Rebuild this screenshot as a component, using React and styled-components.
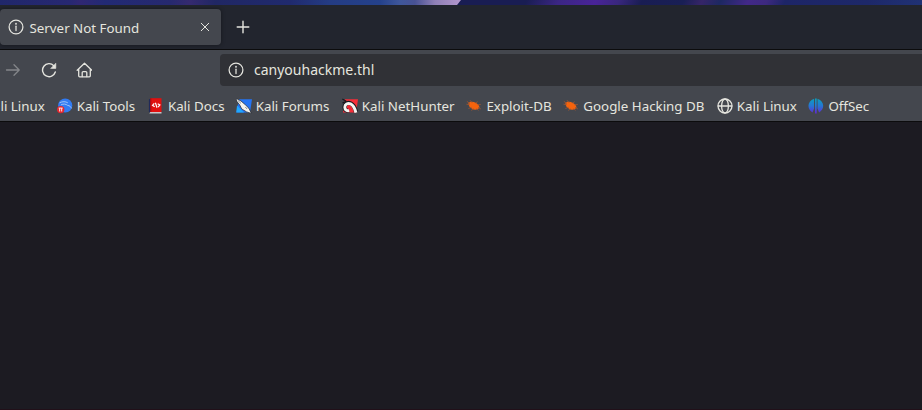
import React from "react";
import styled, { createGlobalStyle } from "styled-components";

const GlobalStyle = createGlobalStyle`
  * { box-sizing: border-box; }
  html, body { margin: 0; padding: 0; overflow: hidden; background: #1c1b22; }
  body { font-family: "Noto Sans", sans-serif; color: #e5e5df; }
`;

const Window = styled.div`
  display: flex;
  flex-direction: column;
  width: 100%;
  height: 410px;
  overflow: hidden;
  background: #1c1b22;
  border-bottom: 1px solid #211019;
`;

const Wallpaper = styled.div`
  flex: none;
  display: flex;
  height: 5px;
  background: linear-gradient(115deg,
      #191d53 0, #191d53 57%, #3b2684 60.5%, #492398 64.5%, #39277d 67%, #191d53 69.5%,
      #191f55 74%, #362568 76%, #1d2862 78%, #422888 81%, #3d2980 83%,
      #1d2567 85%, #1d2869 94%, #203275 100%);
`;

const WallpaperGlow = styled.div`
  width: 461px;
  clip-path: polygon(0 0, 100% 0, 457px 100%, 0 100%);
  background: linear-gradient(90deg,
      #20276b 0, #272872 70px, #302773 80px, #222a75 105px, #26296f 170px,
      #352a70 190px, #202764 215px, #202a6e 290px, #243c84 330px, #24418b 380px,
      #3f579b 400px, #485294 415px, #8f80b6 435px, #b397cd 461px);
`;

const TabStrip = styled.div`
  flex: none;
  display: flex;
  align-items: center;
  height: 45px;
  border-bottom: 1px solid #0c0c0d;
  background: #22252e;
`;

const Tab = styled.div`
  display: flex;
  align-items: center;
  width: 221px;
  height: 36px;
  padding: 0 11px 0 7.5px;
  border-radius: 4px;
  background: #44474e;
  box-shadow: 0 0 4px rgba(0, 0, 0, 0.4);
`;

const TabTitle = styled.span`
  flex: 1;
  margin-left: 6px;
  font-size: 13.33px;
  line-height: 18px;
  white-space: nowrap;
  padding-top: 2px;
`;

const NewTab = styled.div`
  display: flex;
  margin-left: 13.5px;
`;

const NavBar = styled.div`
  flex: none;
  display: flex;
  align-items: center;
  height: 40px;
  padding-left: 5px;
  background: #44474e;
`;

const NavButton = styled.div`
  display: flex;
  width: 16px;
  height: 16px;
  margin-right: ${(p) => p.$gap}px;
  color: ${(p) => (p.$disabled ? "#84868a" : "#e5e5df")};
`;

const AddressField = styled.div`
  flex: 1;
  display: flex;
  align-items: center;
  height: 32px;
  padding-left: 7.5px;
  border-radius: 4px 0 0 4px;
  background: #303136;
`;

const Address = styled.span`
  margin-left: 10.5px;
  font-size: 14px;
  line-height: 20px;
`;

const BookmarksBar = styled.div`
  flex: none;
  display: flex;
  align-items: center;
  height: 32px;
  padding-left: 0.5px;
  border-bottom: 1px solid #0c0c0d;
  background: #44474e;
`;

const Bookmark = styled.div`
  flex: none;
  display: flex;
  align-items: center;
  gap: 4px;
  width: ${(p) => p.$width}px;
  font-size: 13.33px;
  line-height: 18px;
  white-space: nowrap;
`;

const Page = styled.main`
  flex: 1;
  background: #1c1b22;
`;

const Svg = styled.svg`
  display: block;
  flex: none;
  width: ${(p) => p.$size || 16}px;
  height: ${(p) => p.$size || 16}px;
`;

const Line = ({ children, size, w = 1.2 }) => (
  <Svg $size={size} viewBox="0 0 16 16" fill="none" stroke="currentColor" strokeWidth={w} strokeLinecap="round" strokeLinejoin="round">
    {children}
  </Svg>
);

const InfoIcon = () => (
  <Line w={1.25}>
    <circle cx="8" cy="8" r="6.9" />
    <path d="M8 7.2v4.3" />
    <circle cx="8" cy="4.8" r=".35" />
  </Line>
);

const CloseIcon = () => <Line size={10} w={1.6}><path d="M2 2l12 12M14 2L2 14" /></Line>;
const PlusIcon = () => <Line w={1.4}><path d="M8 2.2v11.6M2.2 8h11.6" /></Line>;
const ForwardIcon = () => <Line w={1.3}><path d="M1.5 8h12.5M9 2.8L14.2 8 9 13.2" /></Line>;

const ReloadIcon = () => (
  <Line w={1.4}>
    <path d="M14.3 10A6.5 6.5 0 1 1 12.8 3.7" />
    <path d="M14.8 1.6v4.8H10z" fill="currentColor" strokeWidth=".6" />
  </Line>
);

const HomeIcon = () => (
  <Line w={1.3}>
    <path d="M1.2 8.2L8.5 1.2l7.3 7M2.7 7v6.8a1 1 0 0 0 1 1h9.6a1 1 0 0 0 1-1V7" />
    <path d="M6.2 14.6v-4a1 1 0 0 1 1-1h2.6a1 1 0 0 1 1 1v4" />
  </Line>
);

const ToolsIcon = () => (
  <Svg viewBox="0 0 16 16">
    <circle cx="8.2" cy="7.5" r="7.1" fill="#317bf3" />
    <path d="M2.6 4.8C5.6 3.2 8.6 3.4 10.8 4.8M4 6.9C6.4 5.5 9 6 10.6 7.4c2.2.2 3.2 1.3 3.8 3" fill="none" stroke="#a9cbf8" strokeWidth=".9" />
    <circle cx="3.7" cy="11.6" r="3.7" fill="#e3262e" />
    <path d="M1.7 10.1h4M2.7 10.2v3.3M4.7 10.2v3.3" fill="none" stroke="#fff" strokeWidth=".9" />
  </Svg>
);

const DocsIcon = () => (
  <Svg viewBox="0 0 16 16">
    <path d="M.9 1.5L2.7.4V15L.9 14z" fill="#202a59" />
    <path d="M2.2.2h11.3V14H2.2z" fill="#e1100f" />
    <path d="M2.2 14h11.3v1.5H1.3z" fill="#c9c5c8" />
    <path d="M2.8.2V14" stroke="#9f0d16" />
    <path d="M6.3 5.3L4.5 7.3l2.2 1.4M9.7 5.7l2.2 1.2-1.8 2.3M7.4 4.8l1.6 4.9" fill="none" stroke="#fff" strokeWidth="1.2" />
  </Svg>
);

const ForumsIcon = () => (
  <Svg viewBox="0 0 16 16">
    <path d="M3 1.2h13l-2 13.4H.3z" fill="#2474f4" />
    <path d="M1 7.5l7 7.1H.3z" fill="#20a8ff" />
    <path d="M-.1.3L5 3l4.6 4 3.4 3.4 2.4 5-4.8-1.5-4.9-3-2-4L1 3.6z" fill="#f3f3ef" stroke="#20242e" strokeWidth=".7" />
    <path d="M2 2.6l3 2.8M9.3 9l1.8 2" stroke="#4b4d55" strokeWidth=".6" />
  </Svg>
);

const NetHunterIcon = () => (
  <Svg viewBox="0 0 16 16">
    <path d="M2.8 1.2H16l-1.9 13.3H1z" fill="#f62d38" />
    <path d="M.3 1l4 2.2M.4 5L4.2 3.4" stroke="#17191e" strokeWidth="1.3" />
    <path d="M14 14c-.8-3.8-2.7-7.3-5.4-8.6-3.1-1.4-6.1.8-6.1 3.7 0 2.5 2.1 4.1 4.4 3.4" fill="none" stroke="#17191e" strokeWidth="4.3" />
    <path d="M7.2 12.7c-2.2.5-4.4-1-4.4-3.5 0-2.8 2.9-4.6 5.8-3.3 2.5 1.2 4.4 4.9 5.3 8.8" fill="none" stroke="#f6f5f2" strokeWidth="2.9" />
    <path d="M5.2 9.5l2.3-2 3.3 4.4H8.1z" fill="#ee2834" />
  </Svg>
);

const BugIcon = () => (
  <Svg viewBox="0 0 16 16">
    <path d="M2.4 5.1C4.2 3.2 7.1 3.3 9.6 4.7c2.2 1.1 3.9 2.8 3.9 5.1-1.9 2.2-5.3 2.4-7.4 1C3.9 9.7 2.3 7.8 2.4 5.1z" fill="#f5630d" />
    <path d="M.8 3.3L4 5.6M4 2.2l2.2 2.6M.4 6.2l3.5.6M2.4 10.5l3.2-1.2M5.2 12.4l2.7-1.6M9.5 5l2.2-1.3M11.4 6.8l3.4-.3M12 9.2l2.9 1.8M10.8 10.4l1.6 2.1" fill="none" stroke="#a05632" strokeWidth=".8" />
  </Svg>
);

const GlobeIcon = () => (
  <Line w={1.3}>
    <circle cx="8" cy="8" r="7" />
    <ellipse cx="8" cy="8" rx="3.4" ry="7" />
    <path d="M1.3 8h13.4" />
  </Line>
);

const OffSecIcon = () => (
  <Svg viewBox="0 0 16 16">
    <defs>
      <linearGradient id="offsec" x1="0" y1="0" x2="0" y2="16" gradientUnits="userSpaceOnUse">
        <stop stopColor="#08a3bd" />
        <stop offset=".5" stopColor="#2676d4" />
        <stop offset="1" stopColor="#6722d4" />
      </linearGradient>
    </defs>
    <path d="M6.1.7v9.8l-1.6 4C-1.1 11.2-1.1 3.2 6.1.7zM9.5.7v9.8l1.6 4c5.7-3.3 5.7-11.3-1.6-13.8zM7 .4h1.7v15.2H7z" fill="url(#offsec)" />
  </Svg>
);

const bookmarks = [
  { label: "li Linux", width: 56.2 },
  { label: "Kali Tools", width: 91.2, Icon: ToolsIcon },
  { label: "Kali Docs", width: 87.8, Icon: DocsIcon },
  { label: "Kali Forums", width: 106.1, Icon: ForumsIcon },
  { label: "Kali NetHunter", width: 124.7, Icon: NetHunterIcon },
  { label: "Exploit-DB", width: 96.9, Icon: BugIcon },
  { label: "Google Hacking DB", width: 153.5, Icon: BugIcon },
  { label: "Kali Linux", width: 91.6, Icon: GlobeIcon },
  { label: "OffSec", width: 80, Icon: OffSecIcon },
];

export default function App() {
  return (
    <>
      <GlobalStyle />
      <Window>
        <Wallpaper><WallpaperGlow /></Wallpaper>
        <TabStrip>
          <Tab>
            <InfoIcon />
            <TabTitle>Server Not Found</TabTitle>
            <CloseIcon />
          </Tab>
          <NewTab><PlusIcon /></NewTab>
        </TabStrip>
        <NavBar>
          <NavButton $disabled $gap={20}><ForwardIcon /></NavButton>
          <NavButton $gap={19}><ReloadIcon /></NavButton>
          <NavButton $gap={128}><HomeIcon /></NavButton>
          <AddressField>
            <InfoIcon />
            <Address>canyouhackme.thl</Address>
          </AddressField>
        </NavBar>
        <BookmarksBar>
          {bookmarks.map(({ label, width, Icon }) => (
            <Bookmark key={label} $width={width}>
              {Icon && <Icon />}
              <span>{label}</span>
            </Bookmark>
          ))}
        </BookmarksBar>
        <Page />
      </Window>
    </>
  );
}
